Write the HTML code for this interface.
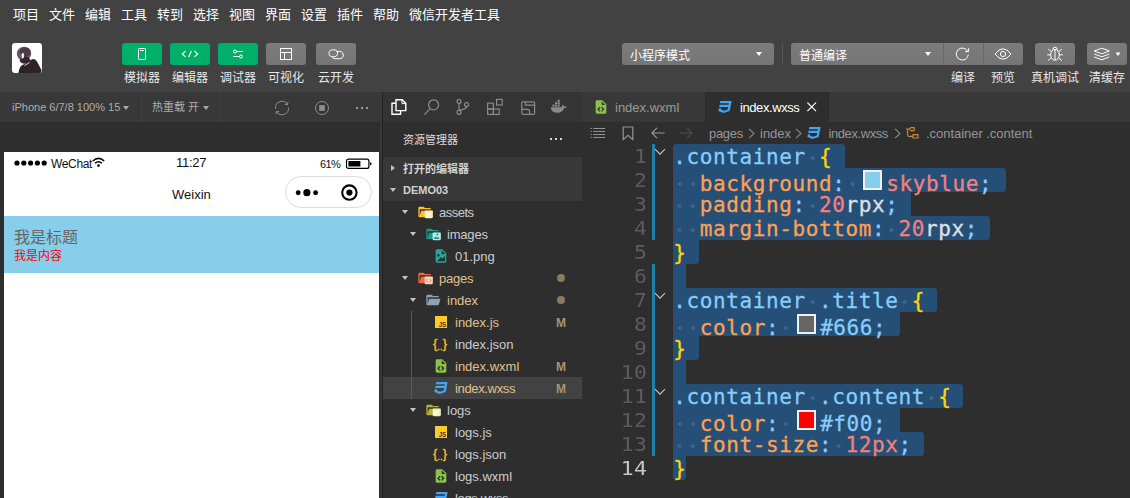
<!DOCTYPE html>
<html lang="zh-CN">
<head>
<meta charset="utf-8">
<title>微信开发者工具</title>
<style>
html,body{margin:0;padding:0;}
body{width:1130px;height:498px;overflow:hidden;position:relative;background:#2e2e2e;
 font-family:"Liberation Sans","Noto Sans CJK SC",sans-serif;color:#fff;-webkit-font-smoothing:antialiased;}
.abs{position:absolute;}
.t{position:absolute;white-space:nowrap;line-height:1;}
/* top */
#top{left:0;top:0;width:1130px;height:92px;background:#424242;}
.menu{top:7px;font-size:13px;line-height:15px;color:#fff;}
.btn{position:absolute;top:43px;height:22px;width:40px;border-radius:3px;}
.g{background:#00b06a;}
.gr{background:linear-gradient(#7c7c7c,#757575);}
.lbl{top:71px;font-size:12px;line-height:14px;color:#e8e8e8;text-align:center;width:60px;}
.sel{position:absolute;top:43px;height:22px;background:linear-gradient(#7c7c7c,#757575);border-radius:3px;}
.seltxt{font-size:12px;line-height:22px;top:44.5px;color:#fff;}
/* simulator */
#simbar{left:0;top:92px;width:382px;height:30px;background:#383838;}
#simbg{left:0;top:122px;width:382px;height:376px;background:#2e2e2e;}
#phone{left:4px;top:152px;width:375px;height:346px;background:#fff;}
#vdiv{left:382px;top:92px;width:1px;height:406px;background:#212121;}
/* sidebar */
#actbar{left:383px;top:92px;width:199px;height:30px;background:#343434;}
#side{left:383px;top:122px;width:199px;height:376px;background:#2e2e2e;}
.row{position:absolute;left:383px;width:199px;height:22px;}
.rt{font-size:13px;line-height:22px;color:#cccccc;}
.mod{color:#e2c08d;}
.M{font-size:12px;font-weight:bold;line-height:22px;color:#a8946f;left:556px;}
.dot{position:absolute;left:557px;width:8px;height:8px;border-radius:4px;background:#8b7a5d;}
.sec{font-size:11px;font-weight:bold;line-height:22px;color:#d2d2d2;left:403px;}
/* editor */
#tabs{left:582px;top:92px;width:548px;height:30px;background:#383838;}
#tab2{left:706px;top:92px;width:122px;height:30px;background:#2e2e2e;}
#ed{left:582px;top:122px;width:548px;height:376px;background:#2e2e2e;}
.bc{font-size:13px;line-height:22px;top:122.8px;color:#969696;}
.ln{position:absolute;left:582px;width:65.4px;text-align:right;font-family:"DejaVu Sans Mono","Liberation Mono",monospace;font-size:19.5px;letter-spacing:0.4px;line-height:25px;transform:scaleX(1.1);transform-origin:100% 50%;height:24px;color:#5c5c5c;}
.code{position:absolute;left:673.3px;font-family:"DejaVu Sans Mono","Liberation Mono",monospace;font-size:21px;letter-spacing:0.602px;line-height:24px;height:24px;white-space:pre;-webkit-text-stroke:0.3px;}
.selbg{position:absolute;left:673px;height:24px;background:#264f78;}
.s{color:#87cefa;} .p{color:#ffa050;} .v{color:#f4807a;} .w{color:#e0e0e0;} .y{color:#ffd700;} .d{background:radial-gradient(circle at 50% 13.1px,#41668d 1.3px,rgba(65,102,141,0) 2.3px) 0 0/13.245px 24px repeat-x;}
.sw{display:inline-block;box-sizing:border-box;width:19px;height:20px;border:2px solid #f0f0f0;margin:0 4.3px 0 4.3px;vertical-align:-0.4px;position:relative;top:-1px;}
</style>
</head>
<body>
<!-- ===== top menu + toolbar ===== -->
<div id="top" class="abs"></div>
<div class="t menu" style="left:13px">项目</div>
<div class="t menu" style="left:49px">文件</div>
<div class="t menu" style="left:85px">编辑</div>
<div class="t menu" style="left:121px">工具</div>
<div class="t menu" style="left:157px">转到</div>
<div class="t menu" style="left:193px">选择</div>
<div class="t menu" style="left:229px">视图</div>
<div class="t menu" style="left:265px">界面</div>
<div class="t menu" style="left:301px">设置</div>
<div class="t menu" style="left:337px">插件</div>
<div class="t menu" style="left:373px">帮助</div>
<div class="t menu" style="left:409px">微信开发者工具</div>

<!-- avatar -->
<svg class="abs" style="left:12px;top:43px" width="30" height="30" viewBox="0 0 30 30">
 <defs><clipPath id="avc"><rect x="0" y="0" width="30" height="30" rx="3"/></clipPath>
 <filter id="avb" x="-20%" y="-20%" width="140%" height="140%"><feGaussianBlur stdDeviation="0.7"/></filter></defs>
 <g clip-path="url(#avc)">
  <rect width="30" height="30" fill="#ffffff"/>
  <g filter="url(#avb)">
   <path d="M6 31 L7.5 25.5 Q9 21.5 13 21 L19.5 16.5 Q22.5 15 25 18.5 L29.5 27 L29 31 Z" fill="#2e2226"/>
   <ellipse cx="12" cy="10.8" rx="7.2" ry="7" fill="#6a5560"/>
   <ellipse cx="13.2" cy="9" rx="5.5" ry="4.6" fill="#4d3b45"/>
   <ellipse cx="13" cy="17.2" rx="5.2" ry="3.6" fill="#33252b"/>
   <ellipse cx="10.8" cy="12.6" rx="1.3" ry="2.9" fill="#f6f1f3"/>
   <circle cx="9.6" cy="15.6" r="0.8" fill="#4a55c0"/>
   <path d="M12.5 22.5 L17.5 19.6" stroke="#e6e0e2" stroke-width="0.9"/>
  </g>
 </g>
</svg>

<!-- left buttons -->
<div class="btn g" style="left:122px"></div>
<div class="btn g" style="left:170px"></div>
<div class="btn g" style="left:218px"></div>
<div class="btn gr" style="left:266px"></div>
<div class="btn gr" style="left:316px"></div>
<!-- phone icon -->
<svg class="abs" style="left:122px;top:43px" width="40" height="22" viewBox="0 0 40 22" fill="none" stroke="#fff" stroke-width="1">
 <rect x="16.5" y="5.5" width="7" height="11" rx="0.8"/><path d="M18 7.5h4" stroke-width="1"/>
</svg>
<!-- code icon -->
<svg class="abs" style="left:170px;top:43px" width="40" height="22" viewBox="0 0 40 22" fill="none" stroke="#fff" stroke-width="1.1">
 <path d="M15.5 8.2 L12.3 11 L15.5 13.8"/><path d="M24.5 8.2 L27.7 11 L24.5 13.8"/><path d="M21.3 8 L18.7 14"/>
</svg>
<!-- sliders icon -->
<svg class="abs" style="left:218px;top:43px" width="40" height="22" viewBox="0 0 40 22" fill="none" stroke="#fff" stroke-width="1">
 <circle cx="17" cy="8.5" r="1.5"/><path d="M18.5 8.5H25"/><circle cx="23" cy="13.5" r="1.5"/><path d="M15 13.5H21.5"/>
</svg>
<!-- layout icon -->
<svg class="abs" style="left:266px;top:43px" width="40" height="22" viewBox="0 0 40 22" fill="none" stroke="#fff" stroke-width="1">
 <rect x="14.5" y="5.5" width="11" height="11"/><path d="M14.5 9.5H25.5M18.5 9.5V16.5"/>
</svg>
<!-- cloud icon -->
<svg class="abs" style="left:316px;top:43px" width="40" height="22" viewBox="0 0 40 22" fill="none" stroke="#fff" stroke-width="1">
 <ellipse cx="17.3" cy="10.3" rx="4.3" ry="3.5"/><path d="M20.5 8.5 Q27 7.5 27.3 12 Q27.2 15.8 23 15.7 H19 Q16.5 15.5 16.6 13.7"/>
</svg>
<div class="t lbl" style="left:112px">模拟器</div>
<div class="t lbl" style="left:160px">编辑器</div>
<div class="t lbl" style="left:208px">调试器</div>
<div class="t lbl" style="left:256px">可视化</div>
<div class="t lbl" style="left:306px">云开发</div>

<!-- selects -->
<div class="sel" style="left:622px;width:152px"></div>
<div class="t seltxt" style="left:630px">小程序模式</div>
<div class="abs" style="left:756px;top:52px;width:0;height:0;border-left:3px solid transparent;border-right:3px solid transparent;border-top:4px solid #fff"></div>
<div class="abs" style="left:782px;top:43px;width:1px;height:22px;background:#555"></div>
<div class="sel" style="left:791px;width:232px"></div>
<div class="abs" style="left:943px;top:43px;width:1px;height:22px;background:#686868"></div>
<div class="abs" style="left:983px;top:43px;width:1px;height:22px;background:#686868"></div>
<div class="t seltxt" style="left:799px">普通编译</div>
<div class="abs" style="left:925px;top:52px;width:0;height:0;border-left:3px solid transparent;border-right:3px solid transparent;border-top:4px solid #fff"></div>
<!-- refresh -->
<svg class="abs" style="left:943px;top:43px" width="40" height="22" viewBox="0 0 40 22" fill="none" stroke="#fff" stroke-width="1">
 <path d="M24.6 8.2 A6 6 0 1 0 25.3 11.6"/><path d="M25.6 5.2 V8.6 H22.2" stroke-width="1"/>
</svg>
<!-- eye -->
<svg class="abs" style="left:983px;top:43px" width="40" height="22" viewBox="0 0 40 22" fill="none" stroke="#fff" stroke-width="1">
 <path d="M12 11 Q16 5.8 20 5.8 Q24 5.8 28 11 Q24 16.2 20 16.2 Q16 16.2 12 11 Z"/><circle cx="20" cy="11" r="2.6"/>
</svg>
<!-- bug -->
<div class="sel" style="left:1035px;width:40px"></div>
<svg class="abs" style="left:1035px;top:43px" width="40" height="22" viewBox="0 0 40 22" fill="none" stroke="#fff" stroke-width="1">
 <ellipse cx="20" cy="11.8" rx="4.3" ry="5.4"/><path d="M20 6.4V17.2"/><path d="M17.6 6.6 Q18 4.2 20 4.2 Q22 4.2 22.4 6.6"/>
 <path d="M15.7 11.8H12.2M24.3 11.8H27.8M16.3 8.6L13.2 6.2M23.7 8.6L26.8 6.2M16.3 15L13.2 17.4M23.7 15L26.8 17.4"/>
</svg>
<!-- layers -->
<div class="sel" style="left:1087px;width:40px"></div>
<svg class="abs" style="left:1087px;top:43px" width="40" height="22" viewBox="0 0 40 22" fill="none" stroke="#fff" stroke-width="1">
 <path d="M14.8 5.2 L22.4 8 L14.8 10.8 L7.2 8 Z"/><path d="M7.2 11 L14.8 13.8 L22.4 11"/><path d="M7.2 14 L14.8 16.8 L22.4 14"/>
 <path d="M28.5 9.5 H33.5 L31 13 Z" fill="#fff" stroke="none"/>
</svg>
<div class="t lbl" style="left:933px">编译</div>
<div class="t lbl" style="left:973px">预览</div>
<div class="t lbl" style="left:1025px">真机调试</div>
<div class="t lbl" style="left:1077px">清缓存</div>

<!-- ===== simulator ===== -->
<div id="simbg" class="abs"></div>
<div id="simbar" class="abs"></div>
<div class="abs" style="left:141px;top:92px;width:1px;height:30px;background:#3f3f3f"></div>
<div class="abs" style="left:220px;top:92px;width:1px;height:30px;background:#3f3f3f"></div>
<div class="t" id="devtxt" style="left:12px;top:100px;font-size:11px;line-height:14px;color:#adadad;letter-spacing:0px">iPhone 6/7/8 100% 15</div>
<div class="abs" style="left:123px;top:106px;width:0;height:0;border-left:3px solid transparent;border-right:3px solid transparent;border-top:4px solid #aaa"></div>
<div class="t" style="left:152px;top:100px;font-size:11px;line-height:14px;color:#adadad">热重载 开</div>
<div class="abs" style="left:203px;top:106px;width:0;height:0;border-left:3px solid transparent;border-right:3px solid transparent;border-top:4px solid #aaa"></div>
<!-- refresh -->
<svg class="abs" style="left:272px;top:98px" width="20" height="20" viewBox="0 0 20 20" fill="none" stroke="#8f8f8f" stroke-width="1">
 <path d="M3.6 10.6 A6.4 6.4 0 0 1 15.4 6.4"/><path d="M16.4 9.4 A6.4 6.4 0 0 1 4.6 13.6"/>
 <path d="M15.9 3.9 L15.5 6.6 L12.8 6.3" /><path d="M4.1 16.1 L4.5 13.4 L7.2 13.7"/>
</svg>
<!-- stop -->
<svg class="abs" style="left:312px;top:98px" width="20" height="20" viewBox="0 0 20 20" fill="none" stroke="#8f8f8f" stroke-width="1">
 <circle cx="10" cy="10" r="6.5"/><rect x="7.2" y="7.2" width="5.6" height="5.6" fill="#8f8f8f" stroke="none"/>
</svg>
<!-- dots -->
<div class="abs" style="left:356px;top:107px;width:2px;height:2px;background:#9a9a9a"></div>
<div class="abs" style="left:361px;top:107px;width:2px;height:2px;background:#9a9a9a"></div>
<div class="abs" style="left:366px;top:107px;width:2px;height:2px;background:#9a9a9a"></div>

<div id="phone" class="abs"></div>
<!-- status bar -->
<svg class="abs" style="left:14px;top:158px" width="36" height="10" viewBox="0 0 36 10">
 <circle cx="3" cy="5" r="2.6" fill="#000"/><circle cx="9.8" cy="5" r="2.6" fill="#000"/><circle cx="16.6" cy="5" r="2.6" fill="#000"/><circle cx="23.4" cy="5" r="2.6" fill="#000"/><circle cx="30.2" cy="5" r="2.6" fill="#000"/>
</svg>
<div class="t" id="wechat" style="letter-spacing:-0.35px;left:51px;top:155.6px;font-size:12px;line-height:16px;color:#111">WeChat</div>
<svg class="abs" style="left:92px;top:157px" width="13" height="11" viewBox="0 0 13 11" fill="none" stroke="#000" stroke-width="1.5">
 <path d="M0.8 4 Q6.5 -1.2 12.2 4"/><path d="M3 6.3 Q6.5 3.2 10 6.3"/><circle cx="6.5" cy="8.6" r="1.3" fill="#000" stroke="none"/>
</svg>
<div class="t" id="clock" style="letter-spacing:-0.3px;left:176px;top:155.3px;font-size:13px;line-height:16px;color:#111">11:27</div>
<div class="t" id="batt" style="letter-spacing:-0.6px;left:320px;top:157px;font-size:11px;line-height:14px;color:#111">61%</div>
<svg class="abs" style="left:345px;top:158px" width="28" height="12" viewBox="0 0 28 12">
 <rect x="1.5" y="1.1" width="22.4" height="9.3" rx="2" fill="none" stroke="#000" stroke-width="1.2"/>
 <rect x="3.4" y="3" width="12" height="5.5" fill="#000"/><path d="M25 4.2 Q26.6 4.6 26.6 5.75 Q26.6 6.9 25 7.3 Z" fill="#000"/>
</svg>
<!-- nav -->
<div class="t" id="weixin" style="left:172px;top:186px;font-size:13px;line-height:17px;color:#111">Weixin</div>
<div class="abs" style="left:285px;top:176px;width:87px;height:32px;box-sizing:border-box;border:1px solid #dbdbdb;border-radius:16px;background:#fff"></div>
<svg class="abs" style="left:285px;top:176px" width="87" height="32" viewBox="0 0 87 32">
 <circle cx="13.2" cy="16.7" r="2.45" fill="#000"/><circle cx="21.9" cy="16.7" r="3.6" fill="#000"/><circle cx="30.6" cy="16.7" r="2.45" fill="#000"/>
 <circle cx="64.4" cy="16.6" r="7.2" fill="none" stroke="#000" stroke-width="2.1"/><circle cx="64.4" cy="16.6" r="3.1" fill="#000"/>
</svg>
<!-- page -->
<div class="abs" style="left:4px;top:216px;width:375px;height:57px;background:#87ceeb"></div>
<div class="t" style="left:14px;top:227px;font-size:16px;line-height:21px;color:#666">我是标题</div>
<div class="t" style="left:14px;top:248px;font-size:12px;line-height:16px;color:#f00">我是内容</div>
<div class="abs" style="left:380px;top:122px;width:2px;height:376px;background:#373737"></div>
<div id="vdiv" class="abs"></div>

<!-- ===== sidebar ===== -->
<div id="actbar" class="abs"></div>
<div id="side" class="abs"></div>
<!-- activity icons -->
<svg class="abs" style="left:390px;top:98px" width="18" height="18" viewBox="0 0 18 18" fill="none" stroke="#ffffff" stroke-width="1.4">
 <path d="M6 1.8 H12.2 L15.8 5.4 V12.6 H6 Z"/><path d="M12 2 V5.6 H15.6" stroke-width="1"/><path d="M5.8 5.2 H2 V16.2 H10.6 V12.8"/>
</svg>
<svg class="abs" style="left:423px;top:98px" width="18" height="18" viewBox="0 0 18 18" fill="none" stroke="#8a8a8a" stroke-width="1.3">
 <circle cx="10.6" cy="6.8" r="5"/><path d="M7.2 10.6 L1.4 16.6"/>
</svg>
<svg class="abs" style="left:454px;top:98px" width="18" height="18" viewBox="0 0 18 18" fill="none" stroke="#8a8a8a" stroke-width="1.2">
 <circle cx="5" cy="3.4" r="2"/><circle cx="5" cy="14.4" r="2"/><circle cx="12.6" cy="6.6" r="2"/><path d="M5 5.4 V12.4"/><path d="M12.6 8.6 Q12.4 11.2 5.4 12.2"/>
</svg>
<svg class="abs" style="left:486px;top:98px" width="18" height="18" viewBox="0 0 18 18" fill="none" stroke="#8a8a8a" stroke-width="1.2">
 <rect x="1.6" y="5.2" width="5.8" height="5.8"/><rect x="1.6" y="11" width="5.8" height="5.4"/><rect x="7.4" y="11" width="5.8" height="5.4"/><rect x="10.6" y="1.4" width="5.6" height="5.6"/>
</svg>
<svg class="abs" style="left:520px;top:98px" width="18" height="18" viewBox="0 0 18 18" fill="none" stroke="#8a8a8a" stroke-width="1.2">
 <rect x="1.8" y="3.8" width="12.8" height="12.6" rx="1"/><path d="M5.4 4 V7.2 H14.4"/><path d="M2 11.4 H7.2 Q9.6 11.4 9.6 13.6 V16.2"/>
</svg>
<svg class="abs" style="left:549px;top:98px" width="20" height="18" viewBox="0 0 20 18" fill="#8a8a8a">
 <path d="M1.6 9.2 H12.6 Q13.6 8 13.2 6.4 Q14.8 7 15 8.4 Q16.6 8 18 8.8 Q17 10.2 15.2 10 Q13.6 14.6 8.6 14.8 Q2.6 15 1.6 9.2 Z"/>
 <rect x="3.4" y="6.6" width="2.2" height="2"/><rect x="6" y="6.6" width="2.2" height="2"/><rect x="8.6" y="6.6" width="2.2" height="2"/><rect x="6" y="4.2" width="2.2" height="2"/><rect x="8.6" y="4.2" width="2.2" height="2"/><rect x="8.6" y="1.8" width="2.2" height="2"/>
</svg>
<!-- header -->
<div class="t" style="left:403px;top:132px;font-size:11px;line-height:16px;color:#dcdcdc">资源管理器</div>
<div class="abs" style="left:550px;top:138.3px;width:2px;height:2px;background:#d8d8d8"></div>
<div class="abs" style="left:555px;top:138.3px;width:2px;height:2px;background:#d8d8d8"></div>
<div class="abs" style="left:560px;top:138.3px;width:2px;height:2px;background:#d8d8d8"></div>
<!-- sections -->
<div class="row" style="top:157px;background:#383838"></div>
<div class="row" style="top:179px;background:#383838"></div>
<div class="abs" style="left:391px;top:164.8px;width:0;height:0;border-top:3.5px solid transparent;border-bottom:3.5px solid transparent;border-left:4.5px solid #c0c0c0"></div>
<div class="t sec" style="top:157.8px">打开的编辑器</div>
<div class="abs" style="left:390px;top:188px;width:0;height:0;border-left:3.5px solid transparent;border-right:3.5px solid transparent;border-top:4.5px solid #c0c0c0"></div>
<div class="t sec" style="top:179px">DEMO03</div>
<!-- selected row -->
<div class="row" style="top:377px;background:#424242"></div>
<!-- indent guide -->
<div class="abs" style="left:411px;top:311px;width:1px;height:88px;background:#585858"></div>
<!--TREE_S-->
<div class="abs" style="left:402.2px;top:210.3px;width:0;height:0;border-left:3.8px solid transparent;border-right:3.8px solid transparent;border-top:4.8px solid #c4c4c4"></div>
<svg class="abs" style="left:417px;top:204px" width="16" height="16" viewBox="0 0 24 24"><path d="M19 20H4a2 2 0 0 1-2-2V6c0-1.11.89-2 2-2h6l2 2h7a2 2 0 0 1 2 2H4v10l2.14-8h17.07l-2.28 8.5c-.23.87-1.01 1.5-1.93 1.5z" fill="#fbc02d"/><rect x="11.4" y="9.6" width="12.4" height="11.6" rx="1.6" fill="#fdeeb0"/><path d="M14 13.6h6.4M14 16.2h6.4M14 18.8h4.6" stroke="#ffffff" stroke-width="1.3" fill="none"/></svg>
<div class="t rt" style="left:439px;top:202px;letter-spacing:-0.5px">assets</div>
<div class="abs" style="left:410.2px;top:232.3px;width:0;height:0;border-left:3.8px solid transparent;border-right:3.8px solid transparent;border-top:4.8px solid #c4c4c4"></div>
<svg class="abs" style="left:425px;top:226px" width="16" height="16" viewBox="0 0 24 24"><path d="M19 20H4a2 2 0 0 1-2-2V6c0-1.11.89-2 2-2h6l2 2h7a2 2 0 0 1 2 2H4v10l2.14-8h17.07l-2.28 8.5c-.23.87-1.01 1.5-1.93 1.5z" fill="#159d88"/><rect x="11.4" y="9.6" width="12.4" height="11.6" rx="1.6" fill="#c4e6e0"/><circle cx="18.6" cy="12.6" r="1.5" fill="#159d88"/><path d="M12.8 19.6l3.4-4.2 2 2.2 1.6-1.4 2 3.4z" fill="#159d88"/></svg>
<div class="t rt" style="left:447px;top:224px;letter-spacing:-0.2px">images</div>
<svg class="abs" style="left:433.3px;top:248.4px" width="16" height="16" viewBox="0 0 24 24"><path d="M13 9h5.5L13 3.5V9M6 2h8l6 6v12a2 2 0 0 1-2 2H6c-1.11 0-2-.9-2-2V4c0-1.11.89-2 2-2m0 18h12v-8l-4 4-2-2-6 6M8 9a2 2 0 0 0-2 2 2 2 0 0 0 2 2 2 2 0 0 0 2-2 2 2 0 0 0-2-2z" fill="#26a69a"/></svg>
<div class="t rt" style="left:455px;top:246px">01.png</div>
<div class="abs" style="left:402.2px;top:276.3px;width:0;height:0;border-left:3.8px solid transparent;border-right:3.8px solid transparent;border-top:4.8px solid #c4c4c4"></div>
<svg class="abs" style="left:417px;top:270px" width="16" height="16" viewBox="0 0 24 24"><path d="M19 20H4a2 2 0 0 1-2-2V6c0-1.11.89-2 2-2h6l2 2h7a2 2 0 0 1 2 2H4v10l2.14-8h17.07l-2.28 8.5c-.23.87-1.01 1.5-1.93 1.5z" fill="#f4693c"/><rect x="11.4" y="9.6" width="12.4" height="11.6" rx="1.6" fill="#fdd0c0"/><path d="M15.6 13.4l-2.2 2.4 2.2 2.4M18.6 13.4l2.2 2.4-2.2 2.4" stroke="#f4693c" stroke-width="1.3" fill="none"/></svg>
<div class="t rt mod" style="left:439px;top:268px;letter-spacing:-0.25px">pages</div>
<div class="dot" style="top:274px"></div>
<div class="abs" style="left:410.2px;top:298.3px;width:0;height:0;border-left:3.8px solid transparent;border-right:3.8px solid transparent;border-top:4.8px solid #c4c4c4"></div>
<svg class="abs" style="left:425px;top:292px" width="16" height="16" viewBox="0 0 24 24"><path d="M19 20H4a2 2 0 0 1-2-2V6c0-1.11.89-2 2-2h6l2 2h7a2 2 0 0 1 2 2H4v10l2.14-8h17.07l-2.28 8.5c-.23.87-1.01 1.5-1.93 1.5z" fill="#8fa2ad"/></svg>
<div class="t rt mod" style="left:447px;top:290px">index</div>
<div class="dot" style="top:296px"></div>
<svg class="abs" style="left:433.4px;top:314.4px" width="16" height="16" viewBox="0 0 24 24"><rect x="3" y="3" width="18" height="18" fill="#ffca28"/><text x="8.6" y="19.4" font-family="Liberation Sans, sans-serif" font-weight="bold" font-size="10.5" fill="#3b3420" textLength="11" lengthAdjust="spacingAndGlyphs">JS</text></svg>
<div class="t rt mod" style="left:455px;top:312px">index.js</div>
<div class="t M" style="top:312px">M</div>
<div class="t" style="left:433px;top:333px;font-size:13px;line-height:21px;font-weight:normal;-webkit-text-stroke:0.35px #f9bf2c;color:#f9bf2c;letter-spacing:-0.2px;font-family:'Liberation Sans',sans-serif">{<span style="font-size:9px;letter-spacing:0.3px;position:relative;top:1.5px">..</span>}</div>
<div class="t rt" style="left:455px;top:334px">index.json</div>
<svg class="abs" style="left:433.3px;top:358px" width="16" height="16" viewBox="0 0 24 24"><path d="M13 9h5.5L13 3.5V9M6 2h8l6 6v12a2 2 0 0 1-2 2H6c-1.11 0-2-.9-2-2V4c0-1.11.89-2 2-2m.12 13.5l3.74 3.74 1.42-1.41-2.33-2.33 2.33-2.33-1.42-1.41-3.74 3.74m11.16 0l-3.74-3.74-1.42 1.41 2.33 2.33-2.33 2.33 1.42 1.41 3.74-3.74z" fill="#8bc34a"/></svg>
<div class="t rt mod" style="left:455px;top:356px">index.wxml</div>
<div class="t M" style="top:356px">M</div>
<svg class="abs" style="left:432.8px;top:380.2px" width="16" height="16" viewBox="0 0 24 24"><path d="M5 3l-.65 3.34h13.59L17.5 8.5H3.92l-.66 3.33h13.59l-.76 3.81-5.48 1.81-4.75-1.81.33-1.64H2.85l-.79 4 7.85 3 9.05-3 1.2-6.03.24-1.21L21.94 3H5z" fill="#42a5f5"/></svg>
<div class="t rt mod" style="left:455px;top:378px;letter-spacing:-0.35px">index.wxss</div>
<div class="t M" style="top:378px">M</div>
<div class="abs" style="left:410.2px;top:408.3px;width:0;height:0;border-left:3.8px solid transparent;border-right:3.8px solid transparent;border-top:4.8px solid #c4c4c4"></div>
<svg class="abs" style="left:425px;top:402px" width="16" height="16" viewBox="0 0 24 24"><path d="M19 20H4a2 2 0 0 1-2-2V6c0-1.11.89-2 2-2h6l2 2h7a2 2 0 0 1 2 2H4v10l2.14-8h17.07l-2.28 8.5c-.23.87-1.01 1.5-1.93 1.5z" fill="#b1b52f"/><rect x="11.4" y="9.6" width="12.4" height="11.6" rx="1.6" fill="#eef0bd"/><path d="M14 13.6h6.4M14 16.2h6.4M14 18.8h4.6" stroke="#ffffff" stroke-width="1.3" fill="none"/></svg>
<div class="t rt" style="left:447px;top:400px">logs</div>
<svg class="abs" style="left:433.4px;top:424.4px" width="16" height="16" viewBox="0 0 24 24"><rect x="3" y="3" width="18" height="18" fill="#ffca28"/><text x="8.6" y="19.4" font-family="Liberation Sans, sans-serif" font-weight="bold" font-size="10.5" fill="#3b3420" textLength="11" lengthAdjust="spacingAndGlyphs">JS</text></svg>
<div class="t rt" style="left:455px;top:422px">logs.js</div>
<div class="t" style="left:433px;top:443px;font-size:13px;line-height:21px;font-weight:normal;-webkit-text-stroke:0.35px #f9bf2c;color:#f9bf2c;letter-spacing:-0.2px;font-family:'Liberation Sans',sans-serif">{<span style="font-size:9px;letter-spacing:0.3px;position:relative;top:1.5px">..</span>}</div>
<div class="t rt" style="left:455px;top:444px">logs.json</div>
<svg class="abs" style="left:433.3px;top:468px" width="16" height="16" viewBox="0 0 24 24"><path d="M13 9h5.5L13 3.5V9M6 2h8l6 6v12a2 2 0 0 1-2 2H6c-1.11 0-2-.9-2-2V4c0-1.11.89-2 2-2m.12 13.5l3.74 3.74 1.42-1.41-2.33-2.33 2.33-2.33-1.42-1.41-3.74 3.74m11.16 0l-3.74-3.74-1.42 1.41 2.33 2.33-2.33 2.33 1.42 1.41 3.74-3.74z" fill="#8bc34a"/></svg>
<div class="t rt" style="left:455px;top:466px">logs.wxml</div>
<svg class="abs" style="left:432.8px;top:490.2px" width="16" height="16" viewBox="0 0 24 24"><path d="M5 3l-.65 3.34h13.59L17.5 8.5H3.92l-.66 3.33h13.59l-.76 3.81-5.48 1.81-4.75-1.81.33-1.64H2.85l-.79 4 7.85 3 9.05-3 1.2-6.03.24-1.21L21.94 3H5z" fill="#42a5f5"/></svg>
<div class="t rt" style="left:455px;top:488px;letter-spacing:-0.35px">logs.wxss</div>
<!--TREE_E-->

<!--ED_S-->
<!-- ===== editor ===== -->
<div id="tabs" class="abs"></div><div id="tab2" class="abs"></div><div id="ed" class="abs"></div>
<div class="abs" style="left:705px;top:92px;width:1px;height:30px;background:#2a2a2a"></div>
<div class="abs" style="left:828px;top:92px;width:1px;height:30px;background:#2c2c2c"></div>
<svg class="abs" style="left:592.7px;top:99px" width="16" height="16" viewBox="0 0 24 24"><path d="M13 9h5.5L13 3.5V9M6 2h8l6 6v12a2 2 0 0 1-2 2H6c-1.11 0-2-.9-2-2V4c0-1.11.89-2 2-2m.12 13.5l3.74 3.74 1.42-1.41-2.33-2.33 2.33-2.33-1.42-1.41-3.74 3.74m11.16 0l-3.74-3.74-1.42 1.41 2.33 2.33-2.33 2.33 1.42 1.41 3.74-3.74z" fill="#8bc34a"/></svg>
<div class="t" id="tab1t" style="left:615px;top:99.6px;font-size:13px;line-height:16px;color:#9a9a9a">index.wxml</div>
<svg class="abs" style="left:716.7px;top:99px" width="16" height="16" viewBox="0 0 24 24"><path d="M5 3l-.65 3.34h13.59L17.5 8.5H3.92l-.66 3.33h13.59l-.76 3.81-5.48 1.81-4.75-1.81.33-1.64H2.85l-.79 4 7.85 3 9.05-3 1.2-6.03.24-1.21L21.94 3H5z" fill="#42a5f5"/></svg>
<div class="t" id="tab2t" style="letter-spacing:-0.42px;left:740px;top:99.6px;font-size:13px;line-height:16px;color:#ffffff">index.wxss</div>
<svg class="abs" style="left:806px;top:101px" width="12" height="12" viewBox="0 0 12 12" stroke="#fff" stroke-width="1.2" fill="none"><path d="M1.4 1.6 L10 10.2 M10 1.6 L1.4 10.2"/></svg>
<svg class="abs" style="left:590px;top:127px" width="16" height="12" viewBox="0 0 16 12" stroke="#939393" stroke-width="1" fill="none"><path d="M0.5 1.5H1.8M3.2 1.5H15M0.5 4.5H1.8M3.2 4.5H15M0.5 7.5H1.8M3.2 7.5H15M0.5 10.5H1.8M3.2 10.5H15"/></svg>
<svg class="abs" style="left:622px;top:126px" width="12" height="15" viewBox="0 0 12 15" stroke="#939393" stroke-width="1.2" fill="none"><path d="M1.2 1 H10.8 V13.6 L6 9.2 L1.2 13.6 Z"/></svg>
<svg class="abs" style="left:651px;top:127.3px" width="14" height="12" viewBox="0 0 14 12" stroke="#9c9c9c" stroke-width="1.1" fill="none"><path d="M13.6 6 H1 M6 0.8 L0.9 6 L6 11.2"/></svg>
<svg class="abs" style="left:679px;top:127.3px" width="14" height="12" viewBox="0 0 14 12" stroke="#4e4e4e" stroke-width="1.1" fill="none"><path d="M0.4 6 H13 M8 0.8 L13.1 6 L8 11.2"/></svg>
<div class="t bc" id="bc1" style="left:709px;letter-spacing:-0.3px">pages</div>
<svg class="abs" style="left:748px;top:128px" width="7" height="11" viewBox="0 0 7 11" stroke="#8a8a8a" stroke-width="1.1" fill="none"><path d="M1 0.8 L6 5.5 L1 10.2"/></svg>
<div class="t bc" id="bc2" style="left:760px">index</div>
<svg class="abs" style="left:795px;top:128px" width="7" height="11" viewBox="0 0 7 11" stroke="#8a8a8a" stroke-width="1.1" fill="none"><path d="M1 0.8 L6 5.5 L1 10.2"/></svg>
<svg class="abs" style="left:805.9px;top:125.1px" width="16" height="16" viewBox="0 0 24 24"><path d="M5 3l-.65 3.34h13.59L17.5 8.5H3.92l-.66 3.33h13.59l-.76 3.81-5.48 1.81-4.75-1.81.33-1.64H2.85l-.79 4 7.85 3 9.05-3 1.2-6.03.24-1.21L21.94 3H5z" fill="#42a5f5"/></svg>
<div class="t bc" id="bc3" style="left:828.5px;letter-spacing:-0.42px">index.wxss</div>
<svg class="abs" style="left:894px;top:128px" width="7" height="11" viewBox="0 0 7 11" stroke="#8a8a8a" stroke-width="1.1" fill="none"><path d="M1 0.8 L6 5.5 L1 10.2"/></svg>
<svg class="abs" style="left:905px;top:126px" width="16" height="14" viewBox="0 0 16 14" stroke="#c98a3c" stroke-width="1.1" fill="none"><path d="M1 3 H4.2 L6 1.6 H9.2 V4.6 H6 L4.4 3.2"/><path d="M2.6 3.2 V9 Q2.6 10.4 4.2 10.4 H8"/><path d="M8 8.6 H13 V12 H8 Z"/></svg>
<div class="t bc" id="bc4" style="left:926px;letter-spacing:-0.04px">.container .content</div>
<div class="abs" style="left:652px;top:144px;width:3px;height:96px;background:#1b81a8"></div>
<div class="abs" style="left:652px;top:264px;width:3px;height:192px;background:#1b81a8"></div>
<svg class="abs" style="left:654px;top:148px" width="12" height="8" viewBox="0 0 12 8" stroke="#c8c8c8" stroke-width="1.1" fill="none"><path d="M1 1.2 L6 6.2 L11 1.2"/></svg>
<svg class="abs" style="left:654px;top:292px" width="12" height="8" viewBox="0 0 12 8" stroke="#c8c8c8" stroke-width="1.1" fill="none"><path d="M1 1.2 L6 6.2 L11 1.2"/></svg>
<svg class="abs" style="left:654px;top:388px" width="12" height="8" viewBox="0 0 12 8" stroke="#c8c8c8" stroke-width="1.1" fill="none"><path d="M1 1.2 L6 6.2 L11 1.2"/></svg>
<div class="selbg" style="top:144px;width:171.6px;border-radius:3px 3px 0px 0px"></div>
<div class="selbg" style="top:168px;width:332.6px;border-radius:0px 3px 3px 0px"></div>
<div class="selbg" style="top:192px;width:237.6px;border-radius:0px 0px 0px 0px"></div>
<div class="selbg" style="top:216px;width:316.8px;border-radius:0px 3px 3px 0px"></div>
<div class="selbg" style="top:240px;width:26.4px;border-radius:0px 0px 3px 0px"></div>
<div class="selbg" style="top:264px;width:13.2px;border-radius:0px 0px 0px 0px"></div>
<div class="selbg" style="top:288px;width:264.0px;border-radius:0px 3px 3px 0px"></div>
<div class="selbg" style="top:312px;width:227.0px;border-radius:0px 0px 3px 0px"></div>
<div class="selbg" style="top:336px;width:26.4px;border-radius:0px 0px 3px 0px"></div>
<div class="selbg" style="top:360px;width:13.2px;border-radius:0px 0px 0px 0px"></div>
<div class="selbg" style="top:384px;width:290.4px;border-radius:0px 3px 3px 0px"></div>
<div class="selbg" style="top:408px;width:227.0px;border-radius:0px 0px 0px 0px"></div>
<div class="selbg" style="top:432px;width:250.8px;border-radius:0px 3px 3px 0px"></div>
<div class="selbg" style="top:456px;width:13.2px;border-radius:0px 0px 3px 3px"></div>
<div class="ln" style="top:144.4px">1</div>
<div class="code" style="top:145px"><span class="s">.container</span><span class="d"> </span><span class="y">{</span></div>
<div class="ln" style="top:168.4px">2</div>
<div class="code" style="top:170.6px"><span class="d">  </span><span class="p">background</span><span class="s">:</span><span class="d"> </span><span class="sw" style="background:#87ceeb"></span><span class="v">skyblue</span><span class="s">;</span></div>
<div class="ln" style="top:192.4px">3</div>
<div class="code" style="top:193px"><span class="d">  </span><span class="p">padding</span><span class="s">:</span><span class="d"> </span><span class="v">20</span><span class="w">rpx</span><span class="s">;</span></div>
<div class="ln" style="top:216.4px">4</div>
<div class="code" style="top:217px"><span class="d">  </span><span class="p">margin-bottom</span><span class="s">:</span><span class="d"> </span><span class="v">20</span><span class="w">rpx</span><span class="s">;</span></div>
<div class="ln" style="top:240.4px">5</div>
<div class="code" style="top:241px"><span class="y">}</span></div>
<div class="ln" style="top:264.4px">6</div>
<div class="code" style="top:265px"></div>
<div class="ln" style="top:288.4px">7</div>
<div class="code" style="top:289px"><span class="s">.container</span><span class="d"> </span><span class="s">.title</span><span class="d"> </span><span class="y">{</span></div>
<div class="ln" style="top:312.4px">8</div>
<div class="code" style="top:314.6px"><span class="d">  </span><span class="p">color</span><span class="s">:</span><span class="d"> </span><span class="sw" style="background:#666666"></span><span class="s">#666;</span></div>
<div class="ln" style="top:336.4px">9</div>
<div class="code" style="top:337px"><span class="y">}</span></div>
<div class="ln" style="top:360.4px">10</div>
<div class="code" style="top:361px"></div>
<div class="ln" style="top:384.4px">11</div>
<div class="code" style="top:385px"><span class="s">.container</span><span class="d"> </span><span class="s">.content</span><span class="d"> </span><span class="y">{</span></div>
<div class="ln" style="top:408.4px">12</div>
<div class="code" style="top:410.6px"><span class="d">  </span><span class="p">color</span><span class="s">:</span><span class="d"> </span><span class="sw" style="background:#ff0000"></span><span class="s">#f00;</span></div>
<div class="ln" style="top:432.4px">13</div>
<div class="code" style="top:433px"><span class="d">  </span><span class="p">font-size</span><span class="s">:</span><span class="d"> </span><span class="v">12px</span><span class="s">;</span></div>
<div class="ln" style="top:456.4px;color:#c6c6c6">14</div>
<div class="code" style="top:457px"><span class="y">}</span></div>
<!--ED_E-->
</body>
</html>
